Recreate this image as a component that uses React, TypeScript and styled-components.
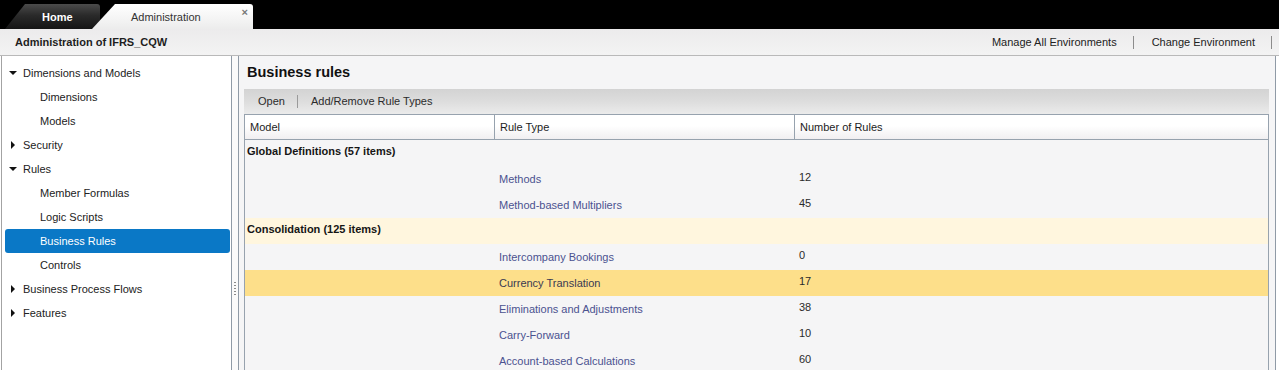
import styled, { createGlobalStyle } from 'styled-components'

const GlobalStyle = createGlobalStyle`
    html, body {
        margin: 0;
        padding: 0;
        background: #ffffff;
        overflow: hidden;
    }
    body {
        font-family: 'Liberation Sans', Arial, sans-serif;
        font-size: 11px;
        color: #222222;
    }
`

const Page = styled.div`
    width: 1279px;
    height: 370px;
    display: flex;
    flex-direction: column;
    overflow: hidden;
`

// top black strip with the two tabs
const TabBar = styled.div`
    height: 29px;
    flex: 0 0 29px;
    background: #000000;
    display: flex;
    align-items: flex-end;
    padding-left: 5px;
`

const HomeTab = styled.div`
    width: 95px;
    height: 25px;
    box-sizing: border-box;
    padding-left: 37px;
    display: flex;
    align-items: center;
    color: #ffffff;
    font-weight: bold;
    background: linear-gradient(to bottom, #4b4b4b 0%, #2a2a2a 45%, #151515 100%);
    border-top-right-radius: 3px;
    clip-path: polygon(20px 0, 100% 0, 100% 100%, 0 100%);
`

const AdminTab = styled.div`
    width: 161px;
    height: 25px;
    margin-left: -8px;
    box-sizing: border-box;
    padding-left: 39px;
    display: flex;
    align-items: center;
    color: #333333;
    background: linear-gradient(to bottom, #ffffff 0%, #f4f4f4 60%, #ececec 100%);
    border-top-right-radius: 3px;
    clip-path: polygon(23px 0, 100% 0, 100% 100%, 0 100%);
`

const CloseMark = styled.span`
    margin-left: auto;
    margin-right: 5px;
    align-self: flex-start;
    margin-top: 2px;
    font-size: 11px;
    font-weight: bold;
    color: #777777;
    line-height: 12px;
`

const HeaderBar = styled.div`
    height: 26px;
    flex: 0 0 26px;
    display: flex;
    align-items: center;
    justify-content: space-between;
    padding: 0 7px 0 15px;
    background: linear-gradient(to bottom, #ecebec, #f3f3f3);
    border-bottom: 1px solid #b9b9b9;
`

const HeaderTitle = styled.div`
    font-weight: bold;
    color: #1e1e1e;
`

const HeaderLinks = styled.div`
    display: flex;
    align-items: center;
`

const HeaderLink = styled.span`
    padding: 0 16px 0 18px;
    color: #222222;
    border-right: 1px solid #8c8c8c;
    line-height: 13px;
`

const Main = styled.div`
    flex: 1;
    display: flex;
    min-height: 0;
    padding: 0 3px 0 1px;
    background: #ffffff;
`

const Sidebar = styled.div`
    width: 229px;
    flex: 0 0 229px;
    border-left: 1px solid #a3a3a3;
    border-right: 1px solid #8f9aa6;
    background: #ffffff;
    padding: 5px 0 0 0;
    display: flex;
    flex-direction: column;
`

const TreeItem = styled.div<{ $level: number; $selected?: boolean }>`
    height: 24px;
    flex: 0 0 auto;
    display: flex;
    align-items: center;
    margin: 0 1px 0 3px;
    padding-left: ${({ $level }) => ($level === 0 ? 4 : 35)}px;
    border-radius: 3px;
    color: ${({ $selected }) => ($selected ? '#ffffff' : '#222222')};
    background: ${({ $selected }) => ($selected ? '#0a78c6' : 'transparent')};
`

const Caret = styled.span<{ $open: boolean }>`
    width: 8px;
    margin-right: 6px;
    display: flex;
    justify-content: center;
    &::before {
        content: '';
        width: 0;
        height: 0;
        ${({ $open }) =>
            $open
                ? `border-left: 4px solid transparent;
                   border-right: 4px solid transparent;
                   border-top: 4px solid #111111;`
                : `border-top: 4px solid transparent;
                   border-bottom: 4px solid transparent;
                   border-left: 4px solid #111111;`}
    }
`

const Splitter = styled.div`
    width: 6px;
    flex: 0 0 6px;
    background: #fafafa;
    display: flex;
    justify-content: center;
    padding-top: 226px;
    box-sizing: border-box;
`

const Grip = styled.div`
    width: 2px;
    height: 14px;
    background: repeating-linear-gradient(
        to bottom,
        #8a8a8a 0,
        #8a8a8a 1px,
        transparent 1px,
        transparent 3px
    );
`

const Content = styled.div`
    flex: 1;
    min-width: 0;
    background: #f5f5f6;
    border-left: 1px solid #8f9aa6;
    border-right: 1px solid #8f9aa6;
    padding: 0 6px 0 5px;
    display: flex;
    flex-direction: column;
`

const Title = styled.div`
    height: 33px;
    flex: 0 0 33px;
    display: flex;
    align-items: center;
    padding-left: 3px;
    padding-bottom: 1px;
    box-sizing: border-box;
    font-size: 14.5px;
    font-weight: bold;
    color: #111111;
`

const Toolbar = styled.div`
    height: 25px;
    flex: 0 0 25px;
    display: flex;
    align-items: center;
    padding-left: 14px;
    background: linear-gradient(to bottom, #d3d3d3 0%, #dddddd 50%, #ebebeb 100%);
`

const ToolButton = styled.span`
    color: #2b2b2b;
    padding-right: 12px;
    & + & {
        padding-left: 13px;
        border-left: 1px solid #9a9a9a;
    }
    line-height: 13px;
`

const Table = styled.div`
    display: flex;
    flex-direction: column;
    border-left: 1px solid #97a2ae;
    border-right: 1px solid #97a2ae;
`

const Row = styled.div`
    display: grid;
    grid-template-columns: 249px 300px 1fr;
`

const HeadRow = styled(Row)`
    height: 24px;
    border-top: 1px solid #97a2ae;
    border-bottom: 1px solid #97a2ae;
    background: linear-gradient(to bottom, #ffffff 0%, #ffffff 45%, #f1eff1 100%);
`

const HeadCell = styled.div`
    display: flex;
    align-items: center;
    padding-left: 5px;
    color: #1c1c1c;
    & + & {
        border-left: 1px solid #97a2ae;
    }
`

const GroupRow = styled.div<{ $tint?: boolean }>`
    height: 26px;
    box-sizing: border-box;
    padding: 5px 0 0 2px;
    line-height: 13px;
    font-weight: bold;
    color: #151515;
    background: ${({ $tint }) => ($tint ? '#fff6de' : 'transparent')};
`

const DataRow = styled(Row)<{ $active?: boolean }>`
    height: 26px;
    background: ${({ $active }) => ($active ? '#fddf8a' : 'transparent')};
`

const RuleCell = styled.div<{ $active?: boolean }>`
    grid-column: 2;
    padding: 7px 0 0 5px;
    line-height: 13px;
    color: ${({ $active }) => ($active ? '#3a3a52' : '#4b5290')};
`

const CountCell = styled.div`
    grid-column: 3;
    padding: 5px 0 0 5px;
    line-height: 13px;
    color: #2a2a2a;
`

const tree = [
    { label: 'Dimensions and Models', level: 0, open: true },
    { label: 'Dimensions', level: 1 },
    { label: 'Models', level: 1 },
    { label: 'Security', level: 0, open: false },
    { label: 'Rules', level: 0, open: true },
    { label: 'Member Formulas', level: 1 },
    { label: 'Logic Scripts', level: 1 },
    { label: 'Business Rules', level: 1, selected: true },
    { label: 'Controls', level: 1 },
    { label: 'Business Process Flows', level: 0, open: false },
    { label: 'Features', level: 0, open: false },
]

const groups = [
    {
        name: 'Global Definitions (57 items)',
        rows: [
            { type: 'Methods', count: 12 },
            { type: 'Method-based Multipliers', count: 45 },
        ],
    },
    {
        name: 'Consolidation (125 items)',
        tint: true,
        rows: [
            { type: 'Intercompany Bookings', count: 0 },
            { type: 'Currency Translation', count: 17, active: true },
            { type: 'Eliminations and Adjustments', count: 38 },
            { type: 'Carry-Forward', count: 10 },
            { type: 'Account-based Calculations', count: 60 },
        ],
    },
]

const App = () => {
    return (
        <Page>
            <GlobalStyle />
            <TabBar>
                <HomeTab>Home</HomeTab>
                <AdminTab>
                    Administration
                    <CloseMark>×</CloseMark>
                </AdminTab>
            </TabBar>
            <HeaderBar>
                <HeaderTitle>Administration of IFRS_CQW</HeaderTitle>
                <HeaderLinks>
                    <HeaderLink>Manage All Environments</HeaderLink>
                    <HeaderLink>Change Environment</HeaderLink>
                </HeaderLinks>
            </HeaderBar>
            <Main>
                <Sidebar>
                    {tree.map((item) => (
                        <TreeItem
                            key={item.label}
                            $level={item.level}
                            $selected={item.selected}
                        >
                            {item.level === 0 && <Caret $open={!!item.open} />}
                            {item.label}
                        </TreeItem>
                    ))}
                </Sidebar>
                <Splitter>
                    <Grip />
                </Splitter>
                <Content>
                    <Title>Business rules</Title>
                    <Toolbar>
                        <ToolButton>Open</ToolButton>
                        <ToolButton>Add/Remove Rule Types</ToolButton>
                    </Toolbar>
                    <Table>
                        <HeadRow>
                            <HeadCell>Model</HeadCell>
                            <HeadCell>Rule Type</HeadCell>
                            <HeadCell>Number of Rules</HeadCell>
                        </HeadRow>
                        {groups.map((g) => (
                            <div key={g.name}>
                                <GroupRow $tint={g.tint}>{g.name}</GroupRow>
                                {g.rows.map((r) => (
                                    <DataRow key={r.type} $active={r.active}>
                                        <RuleCell $active={r.active}>
                                            {r.type}
                                        </RuleCell>
                                        <CountCell>{r.count}</CountCell>
                                    </DataRow>
                                ))}
                            </div>
                        ))}
                    </Table>
                </Content>
            </Main>
        </Page>
    )
}

export default App
